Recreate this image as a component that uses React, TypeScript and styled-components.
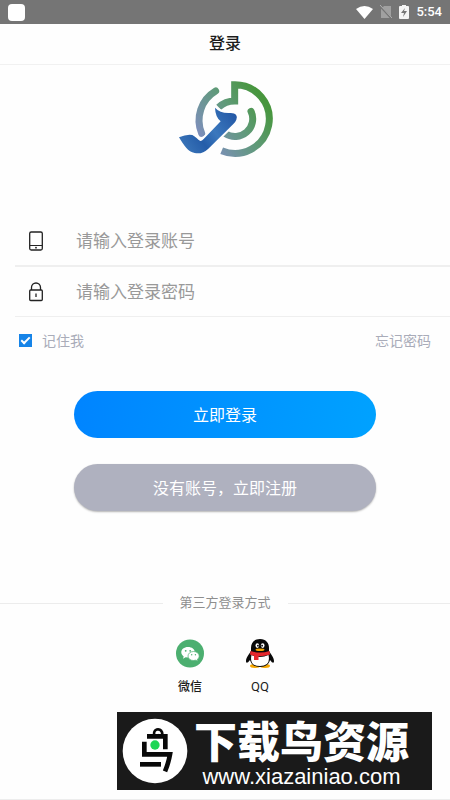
import React from "react";
import styled, { createGlobalStyle } from "styled-components";

const GlobalStyle = createGlobalStyle`
  *, *::before, *::after { box-sizing: border-box; }
  body {
    margin: 0;
    background: #fefefe;
    font-family: Roboto, "Noto Sans CJK SC", sans-serif;
    color: #1c1c1c;
  }
  button, input { font: inherit; }
`;

const Page = styled.div`
  display: flex;
  flex-direction: column;
  min-height: 100vh;
  border-bottom: 1px solid #ededed;
`;

const StatusBar = styled.div`
  display: flex;
  align-items: center;
  justify-content: space-between;
  height: 24px;
  padding: 0 8px;
  background: #757575;
  color: #fff;
`;

const AppBadge = styled.span`
  width: 17px;
  height: 17px;
  border-radius: 4px;
  background: #fff;
`;

const StatusIcons = styled.div`
  display: flex;
  align-items: center;
  gap: 7px;
  font-size: 13px;
  line-height: 24px;
  font-weight: 500;

  svg { display: block; }
`;

const Header = styled.header`
  display: flex;
  align-items: center;
  justify-content: center;
  height: 41px;
  border-bottom: 1px solid #f1f1f1;
`;

const Title = styled.h1`
  margin: 0;
  font-size: 16px;
  line-height: 24px;
  font-weight: 500;
`;

const LogoArea = styled.div`
  display: flex;
  justify-content: center;
  height: 151px;
  padding-top: 7px;
`;

const Field = styled.label`
  display: flex;
  align-items: center;
  height: 51px;
  margin-left: 15px;
  padding-left: 12px;
  border-bottom: 2px solid #efefef;

  & + & { height: 50px; border-bottom: 1px solid #efefef; }
  svg { flex: none; }
`;

const TextInput = styled.input`
  flex: 1;
  min-width: 0;
  height: 40px;
  margin-left: 31px;
  padding: 0;
  border: 0;
  outline: 0;
  background: transparent;
  font-size: 17px;

  &::placeholder { color: #999; opacity: 1; }
`;

const Options = styled.div`
  display: flex;
  align-items: center;
  justify-content: space-between;
  height: 46px;
  padding: 0 19px;
  font-size: 14px;
  color: #a9acb9;
`;

const Remember = styled.label`
  display: flex;
  align-items: center;
  gap: 10px;
`;

const Tick = styled.input`
  appearance: none;
  width: 13px;
  height: 13px;
  margin: 0;
  display: grid;
  place-items: center;
  border: 1px solid #1684e8;
  background: #fff;

  &:checked { background: #1684e8; }
  &:checked::before {
    content: "";
    width: 9px;
    height: 5px;
    border: solid #fff;
    border-width: 0 0 2px 2px;
    transform: translateY(-1px) rotate(-45deg);
  }
`;

const TextLink = styled.a`
  color: inherit;
  text-decoration: none;
`;

const Actions = styled.div`
  display: flex;
  flex-direction: column;
  gap: 26px;
  padding: 28px 74px 0;
`;

const PillButton = styled.button<{ $primary?: boolean }>`
  height: 47px;
  padding: 0 0 2px;
  border: 0;
  border-radius: 24px;
  color: #fff;
  font-size: 16px;
  background: ${(p) => (p.$primary ? "linear-gradient(100deg, #0084ff, #00a2ff)" : "#afb1bf")};
  box-shadow: ${(p) => (p.$primary ? "none" : "0 1px 2px rgba(0, 0, 0, 0.3)")};
`;

const Divider = styled.div`
  display: flex;
  align-items: center;
  gap: 17px;
  margin-top: 82px;
  font-size: 13px;
  line-height: 20px;
  color: #8e8e8e;

  &::before, &::after {
    content: "";
    flex: 1;
    height: 1px;
    background: #ececec;
  }
`;

const Providers = styled.div`
  display: flex;
  justify-content: center;
  gap: 30px;
  margin-top: 26px;
`;

const Provider = styled.button`
  display: flex;
  flex-direction: column;
  align-items: center;
  gap: 10px;
  width: 40px;
  padding: 0;
  border: 0;
  background: none;
  color: #1c1c1c;
  font-size: 12px;
  line-height: 18px;
  font-weight: 500;
`;

const LatinName = styled.span`
  font-size: 13px;
  font-weight: 400;
`;

const Banner = styled.footer`
  display: flex;
  align-items: center;
  align-self: flex-end;
  gap: 6px;
  height: 78px;
  margin: 16px 18px 9px;
  padding: 0 23px 0 5px;
  background: #1a1a1a;
  color: #fff;
`;

const BannerText = styled.div`
  display: flex;
  flex-direction: column;
  align-items: center;
  gap: 4px;
  padding-top: 2px;
`;

const BannerName = styled.strong`
  font-family: "Noto Sans CJK SC", sans-serif;
  font-size: 43px;
  line-height: 46px;
  font-weight: 900;
  font-style: oblique 6deg;
`;

const BannerSite = styled.a`
  font-family: "Liberation Sans", Arial, sans-serif;
  font-size: 22px;
  line-height: 22px;
  color: #fff;
  text-decoration: none;
`;

const WifiIcon = () => (
  <svg width="17" height="13" viewBox="0 0 17 13" aria-hidden="true">
    <path d="M0 3Q8.500 -3 17 3L8.500 13Z" fill="#fff" />
  </svg>
);

const NoSimIcon = () => (
  <svg width="12" height="14" viewBox="0 0 12 14" aria-hidden="true">
    <path d="M4 1H11V13H1V4Z" fill="#a0a0a0" />
    <path d="M0 1L12 14" stroke="#757575" strokeWidth="2" />
    <path d="M0 0L12 13" stroke="#b0b0b0" />
  </svg>
);

const BatteryIcon = () => (
  <svg width="10" height="14" viewBox="0 0 10 14" aria-hidden="true">
    <path d="M3 0H7V1H9Q10 1 10 2V13Q10 14 9 14H1Q0 14 0 13V2Q0 1 1 1H3Z" fill="#f4f4f4" />
    <path d="M6 3L2 8H5L4 12L8 6H5Z" fill="#757575" />
  </svg>
);

const Logo = () => (
  <svg width="110" height="95" viewBox="0 0 330 285" role="img" aria-label="logo">
    <defs>
      <linearGradient id="ring" gradientUnits="userSpaceOnUse" x1="285" y1="90" x2="110" y2="215">
        <stop offset="0" stopColor="#47963d" />
        <stop offset="0.45" stopColor="#5f9a78" />
        <stop offset="1" stopColor="#7d8fba" />
      </linearGradient>
      <linearGradient id="blade" gradientUnits="userSpaceOnUse" x1="190" y1="115" x2="40" y2="225">
        <stop offset="0" stopColor="#2357a5" />
        <stop offset="0.45" stopColor="#3b78bd" />
        <stop offset="0.7" stopColor="#255da9" />
        <stop offset="1" stopColor="#3974b8" />
      </linearGradient>
    </defs>
    <g fill="none" stroke="url(#ring)" strokeWidth="21">
      <path d="M137 57A102 102 0 0 0 95 184" strokeLinecap="round" />
      <path d="M146 106Q166 87 194 87V38A103 103 0 1 1 155 236" />
      <path d="M243 118A53 53 0 0 1 166 185" strokeLinecap="round" />
    </g>
    <path
      d="M135 107Q150 124 178 123Q206 121 199 143Q197 149 190 156L115 230Q96 248 74 243C54 240 42 220 27 196Q50 186 67 189C77 194 83 203 91 207Q96 207 101 201L152 148Q136 135 135 107Z"
      fill="url(#blade)" stroke="#fefefe" strokeWidth="12" paintOrder="stroke"
    />
  </svg>
);

const PhoneIcon = () => (
  <svg width="18" height="22" viewBox="0 0 18 22" fill="none" stroke="#222" aria-hidden="true">
    <rect x="2.700" y="2" width="12.600" height="18" rx="1.500" strokeWidth="1.300" />
    <path d="M3 15.500H15" />
    <circle cx="9" cy="17.700" r="0.900" fill="#222" stroke="none" />
  </svg>
);

const LockIcon = () => (
  <svg width="18" height="22" viewBox="0 0 18 22" fill="none" stroke="#222" strokeWidth="1.300" aria-hidden="true">
    <rect x="2.700" y="9" width="12.600" height="10.500" rx="1" />
    <path d="M4.500 9V6.500A4.500 4.500 0 0 1 13.500 6.500V9M9 12.500V16" />
  </svg>
);

const WechatIcon = () => (
  <svg width="28" height="29" viewBox="0 0 28 29" aria-hidden="true">
    <circle cx="14" cy="14.500" r="14" fill="#4caf70" />
    <path d="M12 8C8 8 5.300 10.300 5.300 13.300C5.300 15 6.200 16.500 7.700 17.500L7 19.700L9.600 18.300L12 18.600C16 18.600 18.700 16 18.700 13.200C18.700 10.200 16 8 12 8Z" fill="#fff" />
    <path d="M17.500 12.500C14.300 12.500 12 14.600 12 17C12 19.600 14.300 21.500 17.500 21.500L19.700 21.200L22 22.300L21.300 20.400C22.500 19.500 23.200 18.400 23.200 17C23.200 14.500 20.700 12.500 17.500 12.500Z" fill="#fff" stroke="#4caf70" strokeWidth="0.700" />
    <g fill="#4caf70">
      <circle cx="9.700" cy="11.800" r="0.900" />
      <circle cx="14.200" cy="11.800" r="0.900" />
      <circle cx="15.700" cy="15.800" r="0.700" />
      <circle cx="19.400" cy="15.800" r="0.700" />
    </g>
  </svg>
);

const QQIcon = () => (
  <svg width="28" height="29" viewBox="0 0 28 29" aria-hidden="true">
    <ellipse cx="9" cy="27" rx="5" ry="1.900" fill="#f6a700" />
    <ellipse cx="19" cy="27" rx="5" ry="1.900" fill="#f6a700" />
    <path d="M14 0C8 0 5 4 5 9V12C3 15 0 19 0 22C0 24 1 25 4 21C5 25 8 28 14 28S23 25 24 21C27 25 28 24 28 22C28 19 25 15 23 12V9C23 4 20 0 14 0Z" fill="#090909" />
    <path d="M5.500 16Q14 20 22.500 16Q25 27 14 27Q3 27 5.500 16Z" fill="#fff" />
    <path d="M4.500 12Q14 15 23.500 12L24 15.500Q18 17.500 12.500 17.300V21H8V17L4 15.500Z" fill="#e5272d" />
    <ellipse cx="11.300" cy="6.600" rx="1.800" ry="2.300" fill="#fff" />
    <ellipse cx="16.700" cy="6.600" rx="1.800" ry="2.300" fill="#fff" />
    <circle cx="11.900" cy="6.700" r="0.900" />
    <circle cx="16.100" cy="6.700" r="0.900" />
    <ellipse cx="14" cy="10.800" rx="4.500" ry="1.200" fill="#f6a700" />
  </svg>
);

const BirdIcon = () => (
  <svg width="66" height="66" viewBox="0 0 198 198" aria-hidden="true">
    <circle cx="99" cy="99" r="97" fill="#fff" />
    <g fill="none" stroke="#090909" strokeWidth="14">
      <path d="M97 52C91 33 115 28 120 43C123 51 116 56 107 51" strokeWidth="8" />
      <path d="M75 55H130V94" />
      <path d="M67 71V109H144Q139 137 129 160" />
      <path d="M54 139H117" />
    </g>
    <circle cx="99" cy="81" r="14" fill="#1fd655" />
  </svg>
);

export default function App() {
  return (
    <>
      <GlobalStyle />
      <Page>
        <StatusBar>
          <AppBadge />
          <StatusIcons>
            <WifiIcon />
            <NoSimIcon />
            <BatteryIcon />
            <span>5:54</span>
          </StatusIcons>
        </StatusBar>
        <Header>
          <Title>登录</Title>
        </Header>
        <LogoArea>
          <Logo />
        </LogoArea>
        <form onSubmit={(e) => e.preventDefault()}>
          <Field>
            <PhoneIcon />
            <TextInput type="text" placeholder="请输入登录账号" aria-label="登录账号" />
          </Field>
          <Field>
            <LockIcon />
            <TextInput type="password" placeholder="请输入登录密码" aria-label="登录密码" />
          </Field>
          <Options>
            <Remember>
              <Tick type="checkbox" defaultChecked />
              记住我
            </Remember>
            <TextLink href="#forgot">忘记密码</TextLink>
          </Options>
          <Actions>
            <PillButton $primary type="submit">立即登录</PillButton>
            <PillButton type="button">没有账号，立即注册</PillButton>
          </Actions>
        </form>
        <Divider>第三方登录方式</Divider>
        <Providers>
          <Provider type="button">
            <WechatIcon />
            微信
          </Provider>
          <Provider type="button">
            <QQIcon />
            <LatinName>QQ</LatinName>
          </Provider>
        </Providers>
        <Banner>
          <BirdIcon />
          <BannerText>
            <BannerName>下载鸟资源</BannerName>
            <BannerSite href="#site">www.xiazainiao.com</BannerSite>
          </BannerText>
        </Banner>
      </Page>
    </>
  );
}
